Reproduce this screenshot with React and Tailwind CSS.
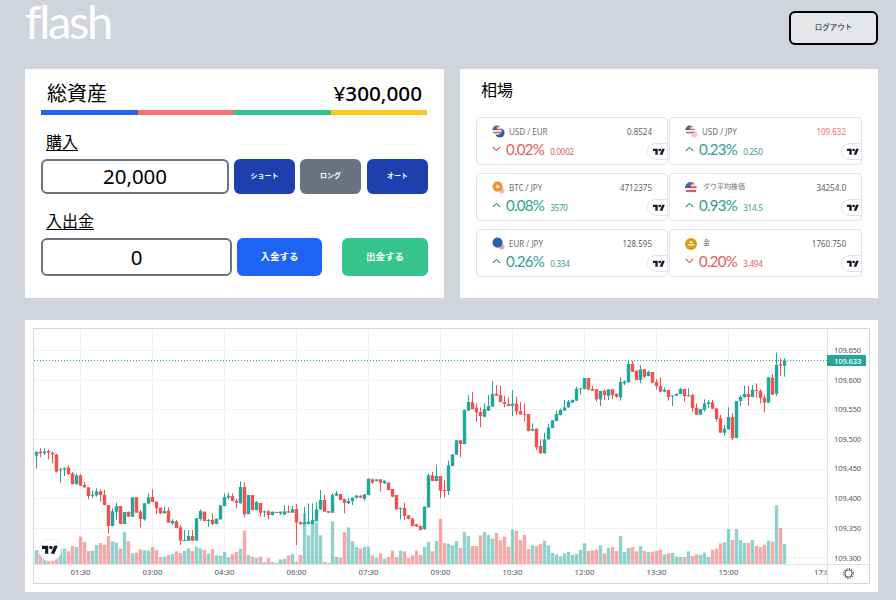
import React from "react";

// candle: [up, bodyTop, bodyBottom, high, low, volumeTop] measured on a 3x grid
const candles = [
  [1,395,407,395,445,690],[0,395,400,385,412,690],[1,395,400,385,405,700],[0,393,398,388,418,710],[0,398,403,395,430,700],[0,403,455,403,458,690],
  [1,448,451,443,488,686],[1,445,449,442,468,686],[0,443,462,436,465,694],[0,460,492,456,494,678],[1,466,492,460,494,681],[0,466,497,462,498,650],
  [0,495,502,485,505,666],[0,502,528,502,538,693],[1,525,527,512,535,692],[1,514,526,505,530,675],[0,514,525,508,545,669],[0,525,555,510,556,674],
  [0,555,618,555,640,648],[1,574,618,565,619,664],[1,558,575,548,600,668],[0,558,612,558,613,686],[1,576,612,576,613,636],[0,576,590,574,591,664],
  [1,532,590,532,591,700],[0,532,578,532,579,698],[0,575,597,570,622,688],[1,550,598,550,602,691],[1,532,551,520,552,692],[0,531,546,508,547,681],
  [0,545,565,545,582,690],[0,563,580,563,583,711],[1,573,580,560,581,710],[0,572,608,562,609,705],[1,603,610,597,615,702],[0,604,624,600,625,694],
  [0,622,662,615,675,699],[1,660,663,630,663,693],[1,648,662,630,663,685],[0,648,662,630,663,693],[1,595,662,595,663,680],[1,573,597,568,602,685],
  [0,575,603,575,604,690],[1,600,602,597,620,701],[0,600,612,580,615,687],[1,596,612,596,613,706],[1,556,598,556,599,707],[1,531,558,520,559,696],
  [1,527,533,518,538,712],[0,528,543,520,544,702],[0,542,548,535,566,696],[1,501,550,484,551,686],[0,501,583,487,592,632],[1,525,582,525,583,706],
  [0,525,570,525,571,710],[1,546,570,544,571,714],[0,549,578,549,590,710],[1,574,576,572,590,726],[0,574,585,570,598,714],[1,575,585,575,586,726],
  [0,576,578,575,579,729],[1,575,580,575,585,718],[1,574,584,556,585,716],[0,574,578,556,579,706],[1,568,578,558,579,702],[0,567,608,552,675,725],
  [0,607,613,603,614,705],[1,606,613,560,614,579],[1,605,612,550,613,646],[1,600,612,550,613,610],[1,568,604,548,605,608],[1,540,568,510,569,646],
  [0,540,575,525,576,725],[0,573,578,573,579,729],[1,525,578,520,579,604],[1,520,527,513,528,711],[0,522,540,522,541,713],[0,537,548,537,580,636],
  [1,543,550,533,552,622],[1,533,543,533,555,664],[1,527,533,525,537,681],[0,527,533,526,534,686],[1,523,537,522,542,680],[1,476,525,476,526,680],
  [0,478,488,476,492,706],[1,478,483,477,485,713],[0,478,488,478,515,700],[1,482,490,481,491,716],[0,488,510,486,511,711],[0,507,530,507,532,692],
  [0,525,568,525,569,711],[1,563,567,563,598,692],[0,564,588,548,600,694],[0,586,597,586,598,714],[0,596,618,594,619,706],[0,613,620,612,621,692],
  [0,618,630,616,631,705],[1,560,628,560,629,681],[1,466,562,460,563,666],[0,466,483,456,484,694],[1,468,483,435,484,663],[0,468,512,468,535,597],
  [0,510,514,480,533,669],[1,436,513,422,525,671],[1,403,438,403,439,676],[1,361,404,361,405,664],[0,361,372,361,412,684],[1,270,372,268,373,636],
  [1,246,272,225,273,648],[0,247,267,215,268,678],[0,263,277,250,305,678],[0,276,288,262,322,646],[1,267,290,250,291,636],[1,258,272,225,273,645],
  [1,222,260,183,261,656],[0,221,227,195,228,639],[0,225,246,197,247,661],[0,246,252,228,262,650],[0,252,258,232,259,680],[1,251,258,210,288,628],
  [0,251,275,230,285,632],[0,273,283,246,284,660],[0,282,285,250,305,645],[0,282,333,282,334,687],[1,327,332,310,333,675],[0,326,382,326,390,678],
  [0,378,400,358,401,672],[1,358,400,338,401,662],[1,323,358,312,359,676],[1,301,324,301,325,699],[1,282,303,272,304,703],[1,270,285,266,286,709],
  [1,262,272,240,273,700],[1,245,262,240,263,696],[1,240,248,238,249,705],[1,206,242,200,243,702],[1,205,208,203,224,690],[1,174,207,174,208,670],
  [0,174,209,174,210,693],[0,207,212,198,213,691],[0,208,238,208,245,689],[1,213,238,213,258,676],[0,212,225,208,240,700],[1,208,228,208,240,684],
  [0,208,225,208,238,681],[0,222,230,220,233,693],[1,186,232,172,242,648],[1,185,190,180,195,696],[1,132,187,120,188,684],[0,132,155,122,156,681],
  [0,152,180,152,181,694],[1,148,180,136,190,678],[0,148,170,148,175,692],[1,156,168,152,169,696],[0,156,188,156,190,695],[0,186,198,178,208,692],
  [0,198,215,172,216,689],[1,209,215,202,216,704],[0,210,231,210,242,700],[1,226,229,226,258,699],[1,221,227,221,228,710],[1,207,222,203,223,711],
  [0,207,228,207,245,711],[1,226,229,205,230,694],[0,225,264,222,275,708],[0,263,284,250,285,703],[1,267,284,267,285,704],[1,251,270,238,275,698],
  [1,247,252,240,265,711],[0,247,266,240,267,689],[0,265,297,265,305,686],[0,295,338,285,339,670],[1,326,338,315,347,667],[1,291,328,262,329,627],
  [0,291,355,280,360,660],[1,243,354,243,355,627],[1,231,243,226,258,660],[1,222,232,197,233,669],[0,222,231,198,258,669],[1,209,231,195,232,660],
  [0,210,213,190,233,678],[0,213,234,208,250,681],[0,233,248,225,278,674],[1,172,248,172,249,662],[0,173,224,162,225,665],[1,135,221,97,228,556],
  [0,133,137,115,168,624],[1,121,137,115,170,672],
];

const priceLabels = [
  ["109.650", 350], ["109.600", 380], ["109.550", 409], ["109.500", 439],
  ["109.450", 468], ["109.400", 498], ["109.350", 528], ["109.300", 558],
];
const timeLabels = ["01:30", "03:00", "04:30", "06:00", "07:30", "09:00", "10:30", "12:00", "13:30", "15:00"];
const gridYs = [21, 51, 80, 110, 140, 169, 199, 228];

const GREEN = "#26a69a";
const RED = "#ef5350";

function TvLogo({ className }) {
  return (
    <svg viewBox="0 0 36 28" className={className} fill="#131722">
      <path d="M14 22H7V11H0V4h14v18z" />
      <path d="M28 22h-8l7.5-18h8L28 22z" />
      <circle cx="20" cy="8" r="4" />
    </svg>
  );
}

function Usa({ x = 6, y = 6, r = 6 }) {
  return (
    <g>
      <circle cx={x} cy={y} r={r} fill="#f1f1f4" />
      <path d={`M${x - r * 0.95} ${y - r * 0.3}h${r * 1.9}v${r * 0.3}h${-r * 1.9}z`} fill="#e25a5a" />
      <path d={`M${x - r * 0.85} ${y + r * 0.35}h${r * 1.7}v${r * 0.3}h${-r * 1.7}z`} fill="#e25a5a" />
      <path d={`M${x - r * 0.5} ${y - r * 0.85}A${r} ${r} 0 0 1 ${x + r * 0.5} ${y - r * 0.85}L${x + r * 0.6} ${y - r * 0.6}h${-r * 1.2}z`} fill="#e25a5a" />
      <path d={`M${x - r} ${y}A${r} ${r} 0 0 1 ${x} ${y - r}V${y}z`} fill="#3f67b5" />
    </g>
  );
}

function TickerIcon({ kind }) {
  return (
    <svg viewBox="0 0 14 14" className="w-[13px] h-[13px] shrink-0">
      {kind === "usdeur" && (
        <>
          <circle cx="8.5" cy="8.5" r="5" fill="#2f5fab" />
          <Usa x={5.5} y={5.5} r={5} />
        </>
      )}
      {kind === "usdjpy" && (
        <>
          <circle cx="10" cy="10" r="3.5" fill="#f6c7cf" />
          <Usa x={5.5} y={5.5} r={5} />
        </>
      )}
      {kind === "btc" && (
        <>
          <circle cx="10.5" cy="10.5" r="3" fill="#f2b7c2" />
          <circle cx="6" cy="6" r="5.5" fill="#f0962f" />
          <circle cx="6" cy="6" r="2" fill="#fbe0bd" />
        </>
      )}
      {kind === "eur" && (
        <>
          <circle cx="10.5" cy="10.5" r="3" fill="#ef9cb5" />
          <circle cx="6" cy="6" r="5.5" fill="#2f5fab" />
        </>
      )}
    </svg>
  );
}

function BigIcon({ kind }) {
  return (
    <svg viewBox="0 0 12 12" className="w-[12px] h-[12px] shrink-0">
      {kind === "us" ? (
        <Usa />
      ) : (
        <>
          <circle cx="6" cy="6" r="6" fill="#d59f0e" />
          <path d="M6 2.8L8 5H4z" fill="#fff" />
          <path d="M2.6 6.2h6.8v1.2H2.6z" fill="#fff" />
        </>
      )}
    </svg>
  );
}

function Ticker({ icon, big, name, price, priceRed, pct, diff, up }) {
  const color = up ? "text-[#2f9e90]" : "text-[#e25a5f]";
  return (
    <div className="relative h-[48px] border border-[#e0e3eb] rounded-sm bg-white overflow-hidden pl-[15px] pr-[15px] pt-[7px]">
      <div className="flex items-center h-[13px]">
        {big ? <BigIcon kind={icon} /> : <TickerIcon kind={icon} />}
        <span className={`text-[#6a6d78] ${big ? "ml-[6px] text-[7px]" : "ml-[4px] text-[8px]"}`}>{name}</span>
        <span className={`ml-auto text-[8px] ${priceRed ? "text-[#ef6b6f]" : "text-[#5d606b]"}`}>{price}</span>
      </div>
      <div className={`flex items-baseline mt-[2px] ${color}`}>
        <svg viewBox="0 0 9 6" className="w-[9px] h-[6px] self-center shrink-0" fill="none" stroke="currentColor" strokeWidth="1.1">
          {up ? <path d="M.8 5L4.5 1.4 8.2 5" /> : <path d="M.8 1L4.5 4.6 8.2 1" />}
        </svg>
        <span className="ml-[5px] text-[15px] leading-[18px] font-['Lato',sans-serif] tracking-[-0.7px]">{pct}</span>
        <span className="ml-[6px] text-[8px] tracking-[-0.2px]">{diff}</span>
      </div>
      <div className="absolute right-[-10px] top-[25px] w-[30px] h-[17px] rounded-full bg-white border border-[#dfe2e8] flex items-center pl-[5px]">
        <TvLogo className="w-[12px] h-[10px]" />
      </div>
    </div>
  );
}

function Chart() {
  return (
    <svg viewBox="0 0 835 254" className="block w-[835px] h-[254px] font-['Noto_Sans',sans-serif]">
      {gridYs.map((y) => (
        <rect key={y} x="0" y={y} width="793" height="1" fill="#f2f3f6" />
      ))}
      {timeLabels.map((t, n) => (
        <rect key={t} x={46 + 72 * n} y="0" width="1" height="235" fill="#eef0f3" />
      ))}
      {candles.map(([up, top, bottom, high, low, vol], i) => (
        <rect key={i} x={0.8 + 4 * i} y={vol / 3 - 9} width="3.4" height={(733 - vol) / 3} fill={up ? GREEN : RED} fillOpacity="0.5" />
      ))}
      {candles.map(([up, top, bottom, high, low], i) => (
        <g key={i} fill={up ? GREEN : RED}>
          <rect x={2 + 4 * i} y={high / 3 - 9} width="1" height={(low - high) / 3} />
          <rect x={0.8 + 4 * i} y={top / 3 - 9} width="3.4" height={Math.max((bottom - top) / 3, 1)} />
        </g>
      ))}
      <line x1="0" y1="31.5" x2="793" y2="31.5" stroke={GREEN} strokeWidth="1" strokeDasharray="1 2" />
      <rect x="793" y="0" width="1" height="254" fill="#e0e3eb" />
      <rect x="0" y="235" width="835" height="1" fill="#e0e3eb" />
      {priceLabels.map(([p, y]) => (
        <text key={p} x="800" y={y - 329 + 3} fontSize="7.5" letterSpacing="-0.1" fill="#50535e">{p}</text>
      ))}
      <rect x="793" y="26" width="39" height="11" fill={GREEN} />
      <text x="800" y="34.5" fontSize="7.5" letterSpacing="-0.1" fill="#fff" fontWeight="500">109.633</text>
      {timeLabels.map((t, n) => (
        <text key={t} x={46.5 + 72 * n} y="246" fontSize="7.8" fill="#50535e" textAnchor="middle">{t}</text>
      ))}
      <text x="780" y="246" fontSize="7.8" fill="#50535e">17:00</text>
      <rect x="794" y="236" width="41" height="18" fill="#fff" />
      <rect x="793" y="236" width="1" height="18" fill="#e0e3eb" />
      <circle cx="814.5" cy="244.5" r="3.6" fill="none" stroke="#50535e" strokeWidth="1" />
      <circle cx="814.5" cy="244.5" r="4.8" fill="none" stroke="#50535e" strokeWidth="1.2" strokeDasharray="1.2 1.3" />
      <circle cx="16" cy="221" r="11" fill="#fff" stroke="#eceef2" />
      <svg x="8" y="215" width="16" height="12.5" viewBox="0 0 36 28" fill="#131722">
        <path d="M14 22H7V11H0V4h14v18z" />
        <path d="M28 22h-8l7.5-18h8L28 22z" />
        <circle cx="20" cy="8" r="4" />
      </svg>
    </svg>
  );
}

export default function App() {
  return (
    <div className="h-[600px] overflow-hidden bg-[#d1d5db] pl-[25px] pr-[18px] font-['Noto_Sans','Noto_Sans_CJK_JP',sans-serif] text-black">
      {/* header */}
      <div className="h-[69px] flex items-start justify-between">
        <div className="text-white text-[47px] leading-[42px] font-['Lato',sans-serif] font-normal tracking-[-2.3px]">flash</div>
        <button className="mt-[11px] w-[89px] h-[34px] rounded-md border-2 border-black bg-[#e5e7eb] text-[7.5px] text-[#111]">ログアウト</button>
      </div>

      <div className="grid grid-cols-[419px_418px] gap-4 h-[229px]">
        {/* assets */}
        <div className="bg-white px-4 pt-[12px]">
          <div className="flex items-center justify-between h-[29px] pl-[6px] pr-[6px] pb-[3px]">
            <span className="text-[20px]">総資産</span>
            <span className="text-[20.7px] font-medium">¥300,000</span>
          </div>
          <div className="flex h-[5px] w-[386px]">
            <div className="flex-1 bg-[#2563eb]"></div>
            <div className="flex-1 bg-[#f87171]"></div>
            <div className="flex-1 bg-[#34c38f]"></div>
            <div className="flex-1 bg-[#fbc71f]"></div>
          </div>
          <div className="mt-[15px] pl-[5px] h-[29px] leading-[24px] text-[16px] underline underline-offset-2">購入</div>
          <div className="flex h-[35px]">
            <div className="w-[188px] border-2 border-[#6b7280] rounded-md flex items-center justify-center text-[20.5px]">20,000</div>
            <button className="ml-[5px] w-[61px] rounded-md bg-[#1e40af] text-white text-[7px] font-bold">ショート</button>
            <button className="ml-[5px] w-[61px] rounded-md bg-[#6b7280] text-white text-[7px] font-bold">ロング</button>
            <button className="ml-[6px] w-[61px] rounded-md bg-[#1e40af] text-white text-[7px] font-bold">オート</button>
          </div>
          <div className="mt-[15px] pl-[5px] h-[29px] leading-[24px] text-[16px] underline underline-offset-2">入出金</div>
          <div className="flex h-[38px]">
            <div className="w-[191px] border-2 border-[#6b7280] rounded-md flex items-center justify-center text-[20.5px]">0</div>
            <button className="ml-[5px] w-[85px] rounded-md bg-[#1d64f2] text-white text-[9.5px] font-bold">入金する</button>
            <button className="ml-[20px] w-[86px] rounded-md bg-[#34c48c] text-white text-[9.5px] font-bold">出金する</button>
          </div>
        </div>

        {/* market */}
        <div className="bg-white pl-4 pt-[9px]">
          <div className="pl-[5px] h-[39px] text-[16px] leading-[24px]">相場</div>
          <div className="grid grid-cols-[192px_193px] gap-y-[8px] gap-x-[1px] w-[386px]">
            <Ticker icon="usdeur" name="USD / EUR" price="0.8524" pct="0.02%" diff="0.0002" />
            <Ticker icon="usdjpy" name="USD / JPY" price="109.632" priceRed pct="0.23%" diff="0.250" up />
            <Ticker icon="btc" name="BTC / JPY" price="4712375" pct="0.08%" diff="3570" up />
            <Ticker icon="us" big name="ダウ平均株価" price="34254.0" pct="0.93%" diff="314.5" up />
            <Ticker icon="eur" name="EUR / JPY" price="128.595" pct="0.26%" diff="0.334" up />
            <Ticker icon="gold" big name="金" price="1760.750" pct="0.20%" diff="3.494" />
          </div>
        </div>
      </div>

      {/* chart */}
      <div className="mt-[22px] h-[272px] bg-white pl-2 pt-2">
        <div className="w-[837px] h-[256px] border border-[#d6d8dd]">
          <Chart />
        </div>
      </div>
    </div>
  );
}
